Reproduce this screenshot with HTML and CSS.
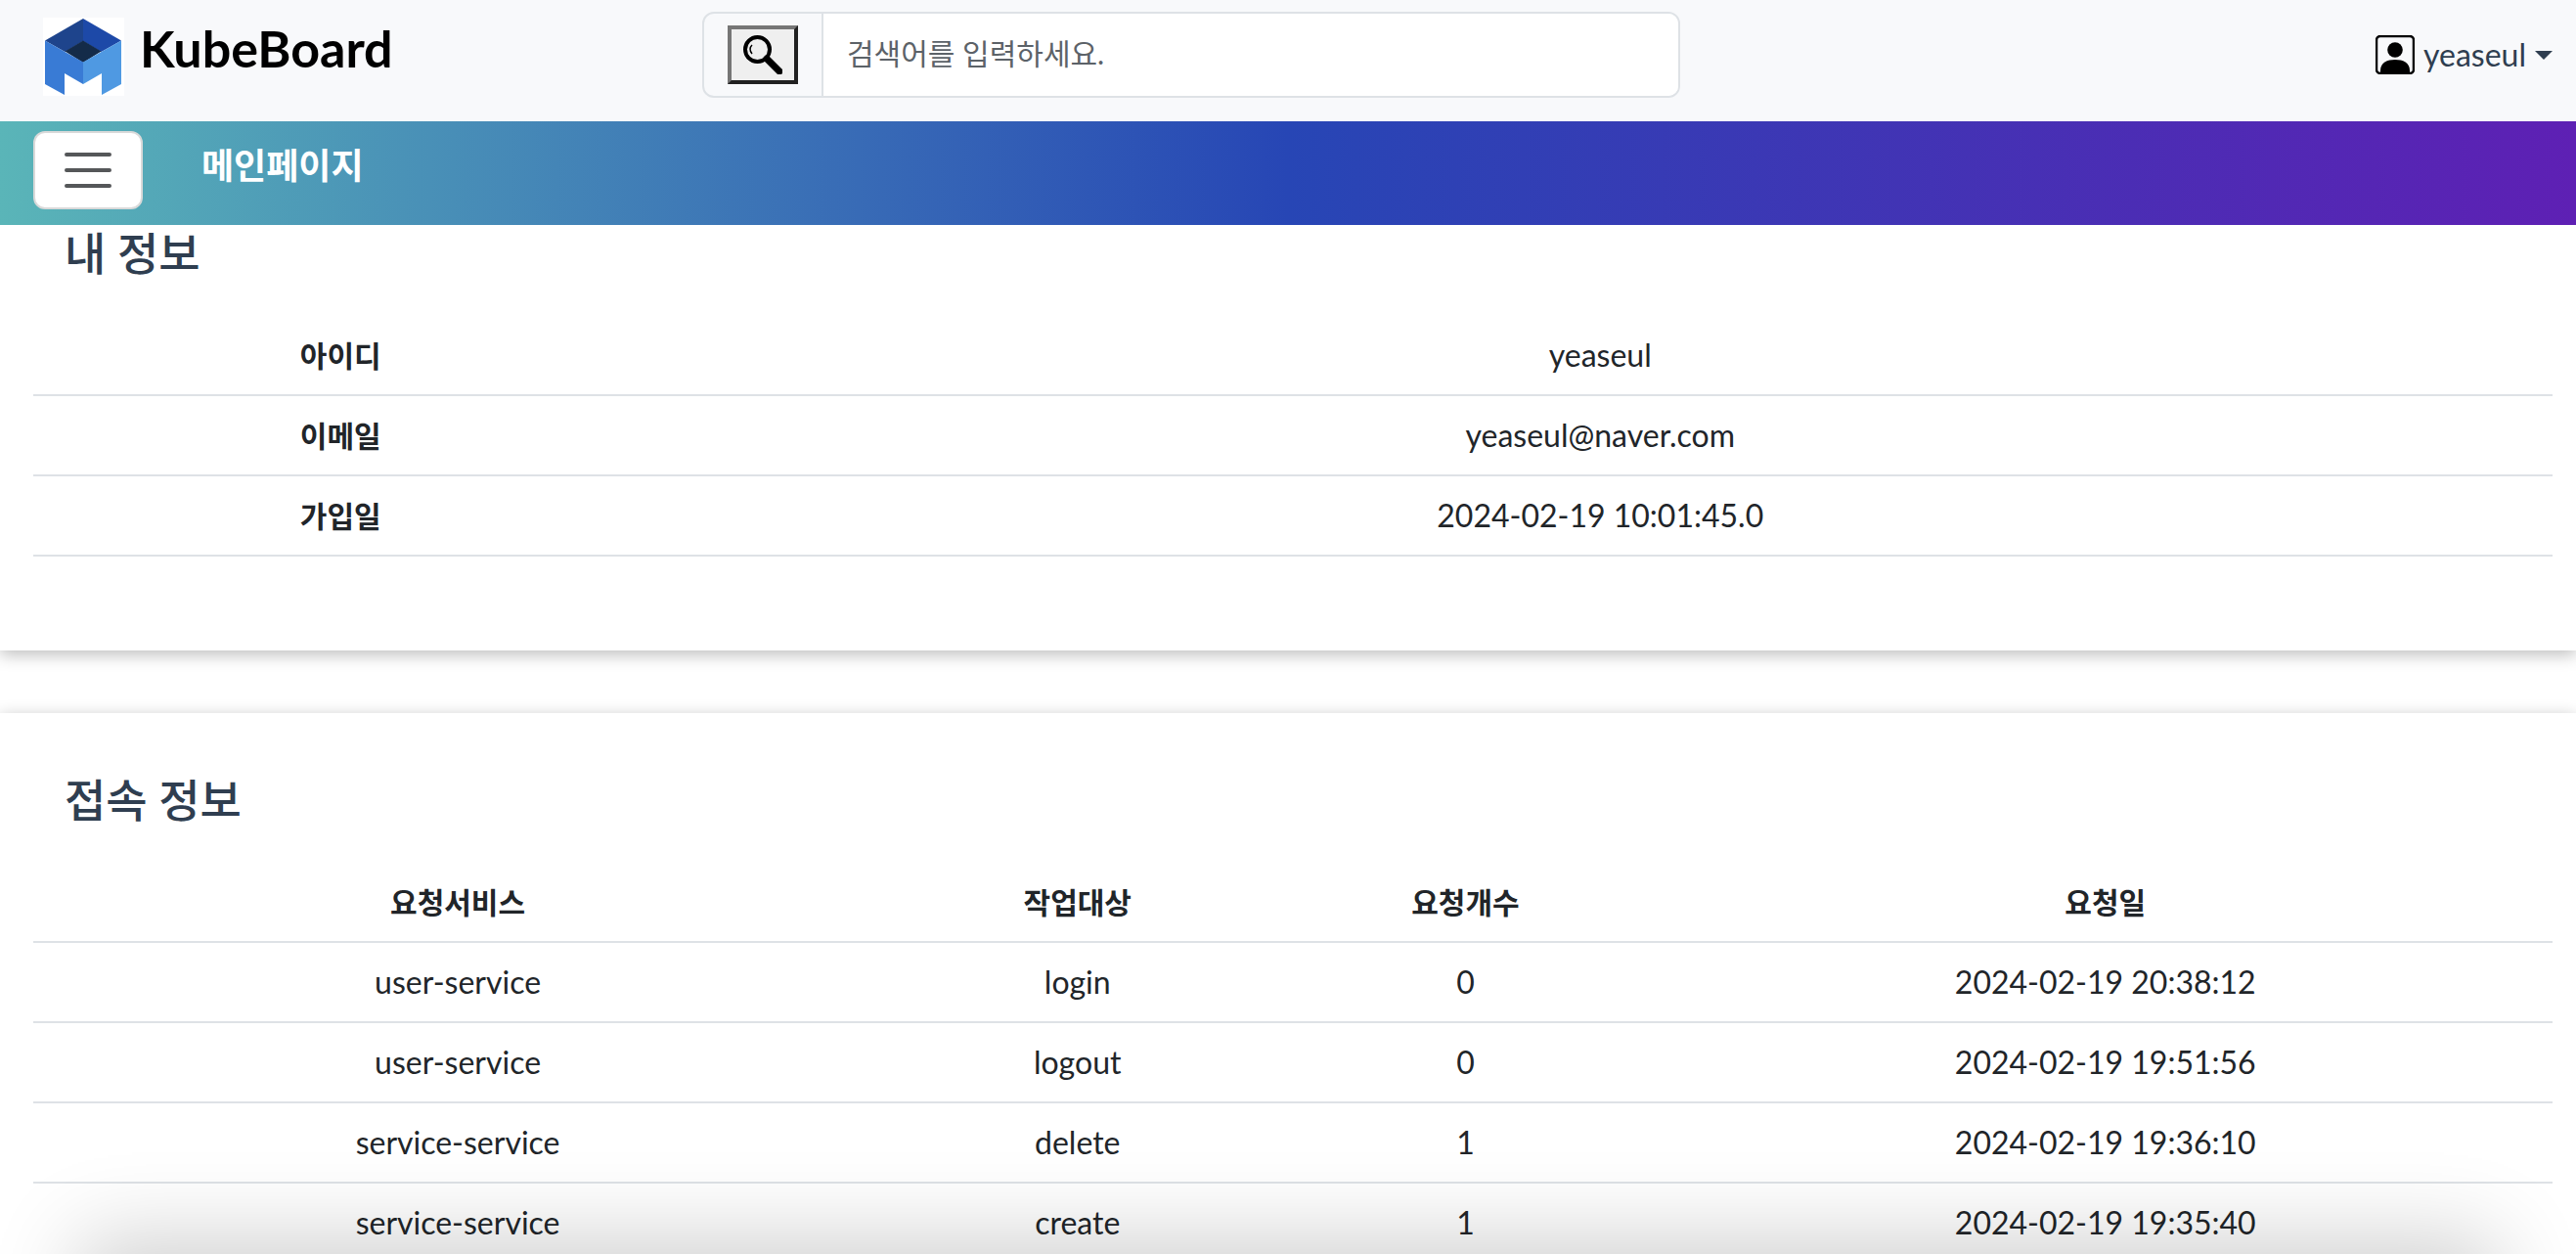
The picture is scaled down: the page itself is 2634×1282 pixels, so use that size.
FILE: index.html
```html
<!DOCTYPE html>
<html lang="ko">
<head>
<meta charset="utf-8">
<meta name="viewport" content="width=device-width, initial-scale=1">
<title>KubeBoard</title>
<link rel="stylesheet" href="styles.css">
</head>
<body>
<header class="topbar">
  <a class="brand" href="#">
    <svg class="brand-logo" viewBox="0 0 83 80" aria-hidden="true">
      <rect width="83" height="80" fill="#fff"/>
      <path d="M41 1 2 23.500 22.500 35 41 24z" fill="#1e448c"/>
      <path d="M41 1 80 23.500 59.500 35 41 24z" fill="#1d49a8"/>
      <path d="M41 23.500 22.500 34.500 41 46 59.500 34.500z" fill="#142b49"/>
      <path d="M2 23.500 41 45.500V68L22 57V79L2 68z" fill="#397bd5"/>
      <path d="M80 23.500 41 45.500V68L60 57V79L80 68z" fill="#4f99e2"/>
    </svg>
    <span class="brand-name">KubeBoard</span>
  </a>
  <form class="search">
    <span class="search-addon">
      <button class="search-button" type="button" aria-label="검색">
        <svg class="search-icon" viewBox="0 0 40 40" aria-hidden="true">
          <circle cx="14.500" cy="14.500" r="12.500" fill="none" stroke="#000" stroke-width="4"/>
          <path d="M24 24 37 37" stroke="#000" stroke-width="7" stroke-linecap="round"/>
          <path d="M9 10Q5 14 9 19" fill="none" stroke="#000" stroke-width="1.500"/>
        </svg>
      </button>
    </span>
    <input class="search-input" type="text" placeholder="검색어를 입력하세요." aria-label="검색어">
  </form>
  <a class="user" href="#">
    <svg class="user-icon" viewBox="0 0 40 40" aria-hidden="true">
      <rect x="1" y="1" width="38" height="38" rx="4" fill="none" stroke="#000" stroke-width="2.500"/>
      <circle cx="20" cy="15" r="7.800"/>
      <path d="M5 39V36C5 28 12 25 20 25S35 28 35 36V39z"/>
    </svg>
    <span>yeaseul</span>
    <span class="caret"></span>
  </a>
</header>
<nav class="menubar">
  <button class="menu-toggle" type="button" aria-label="메뉴">
    <svg class="menu-icon" viewBox="0 0 60 60" aria-hidden="true">
      <path d="M8 14H52M8 30H52M8 46H52" stroke="#555759" stroke-width="4" stroke-linecap="round"/>
    </svg>
  </button>
  <a class="menu-title" href="#">메인페이지</a>
</nav>
<main class="content">
  <section class="panel panel-first">
    <h2 class="panel-title">내 정보</h2>
    <table class="data-table profile">
      <tbody>
        <tr><th scope="row">아이디</th><td>yeaseul</td></tr>
        <tr><th scope="row">이메일</th><td>yeaseul@naver.com</td></tr>
        <tr><th scope="row">가입일</th><td>2024-02-19 10:01:45.0</td></tr>
      </tbody>
    </table>
  </section>
  <section class="panel">
    <h2 class="panel-title">접속 정보</h2>
    <table class="data-table history">
      <thead>
        <tr><th scope="col" class="col-service">요청서비스</th><th scope="col" class="col-target">작업대상</th><th scope="col" class="col-count">요청개수</th><th scope="col">요청일</th></tr>
      </thead>
      <tbody>
        <tr><td>user-service</td><td>login</td><td>0</td><td>2024-02-19 20:38:12</td></tr>
        <tr><td>user-service</td><td>logout</td><td>0</td><td>2024-02-19 19:51:56</td></tr>
        <tr><td>service-service</td><td>delete</td><td>1</td><td>2024-02-19 19:36:10</td></tr>
        <tr><td>service-service</td><td>create</td><td>1</td><td>2024-02-19 19:35:40</td></tr>
      </tbody>
    </table>
  </section>
</main>
<div class="drawer"></div>
</body>
</html>
```
FILE: styles.css
```css
* { box-sizing: border-box; }

body {
  margin: 0;
  height: 100vh;
  overflow: hidden;
  background: #fff;
  color: #212529;
  font-family: Lato, "Noto Sans CJK KR", sans-serif;
  font-size: 32px;
  font-weight: 400;
  line-height: 48px;
}

a { color: inherit; text-decoration: none; }

.topbar {
  display: grid;
  grid-template-columns: 674fr 1000fr 892fr;
  align-items: center;
  height: 124px;
  padding: 0 24px 12px 44px;
  background: #f8f9fb;
}

.brand {
  display: flex;
  gap: 16px;
  color: #000;
  font-size: 52px;
  font-weight: 700;
}

.brand-logo { width: 83px; height: 80px; margin-top: 4px; }
.brand-name { line-height: 70px; }

.search {
  display: flex;
  height: 88px;
  border: 2px solid #dee2e6;
  border-radius: 12px;
  overflow: hidden;
}

.search-addon {
  display: flex;
  align-items: center;
  padding: 0 24px;
  border-right: 2px solid #dee2e6;
}

.search-button {
  width: 72px;
  height: 60px;
  padding: 4px 8px;
  border: 4px solid;
  border-color: #767676 #212121 #212121 #767676;
  background: #efefef;
}

.search-icon { display: block; width: 40px; height: 40px; margin: auto; }

.search-input {
  flex: 1;
  min-width: 0;
  padding: 0 24px 4px;
  border: 0;
  background: #fff;
  color: #212529;
  font: inherit;
  font-size: 30px;
}

.search-input::placeholder { color: #5c6268; opacity: 1; }

.user {
  display: flex;
  align-items: center;
  justify-content: flex-end;
  gap: 9px;
  color: #2f3e50;
}

.user-icon { width: 40px; height: 40px; }

.caret {
  border: 9px solid transparent;
  border-top-color: #2f3e50;
  border-bottom: 0;
}

.menubar {
  position: relative;
  z-index: 1;
  display: flex;
  align-items: center;
  gap: 60px;
  height: 106px;
  padding: 0 34px 6px;
  background: linear-gradient(90deg, #5ab5b8, #2746b5 50%, #5e20b4);
  color: #fff;
}

.menu-toggle {
  display: flex;
  align-items: center;
  justify-content: center;
  width: 112px;
  height: 80px;
  border: 2px solid #d9d9d9;
  border-radius: 12px;
  background: #fff;
}

.menu-icon { width: 60px; height: 60px; }

.menu-title { padding-bottom: 10px; font-size: 36px; font-weight: 700; }

.content { display: grid; gap: 64px; }

.panel {
  padding: 60px 24px 96px 34px;
  background: #fff;
  box-shadow: 0 4px 16px rgba(0, 0, 0, .27);
}

.panel-first { padding-top: 0; }

.panel-title {
  margin: 0 0 36px;
  padding: 0 32px;
  color: #2f3e50;
  font-size: 46px;
  font-weight: 500;
  line-height: 57px;
}

.data-table {
  width: 100%;
  border-collapse: separate;
  border-spacing: 0;
  table-layout: fixed;
  text-align: center;
}

.data-table th,
.data-table td {
  padding: 16px;
  border-bottom: 2px solid #dee2e6;
}

.data-table th { font-size: 30px; font-weight: 700; }

.profile th { width: 24.4%; }
.col-service { width: 33.7%; }
.col-target { width: 15.5%; }
.col-count { width: 15.3%; }

.drawer {
  position: fixed;
  top: 100%;
  left: 80px;
  right: 80px;
  height: 320px;
  box-shadow: 0 -16px 84px rgba(0, 0, 0, .19);
}
```
